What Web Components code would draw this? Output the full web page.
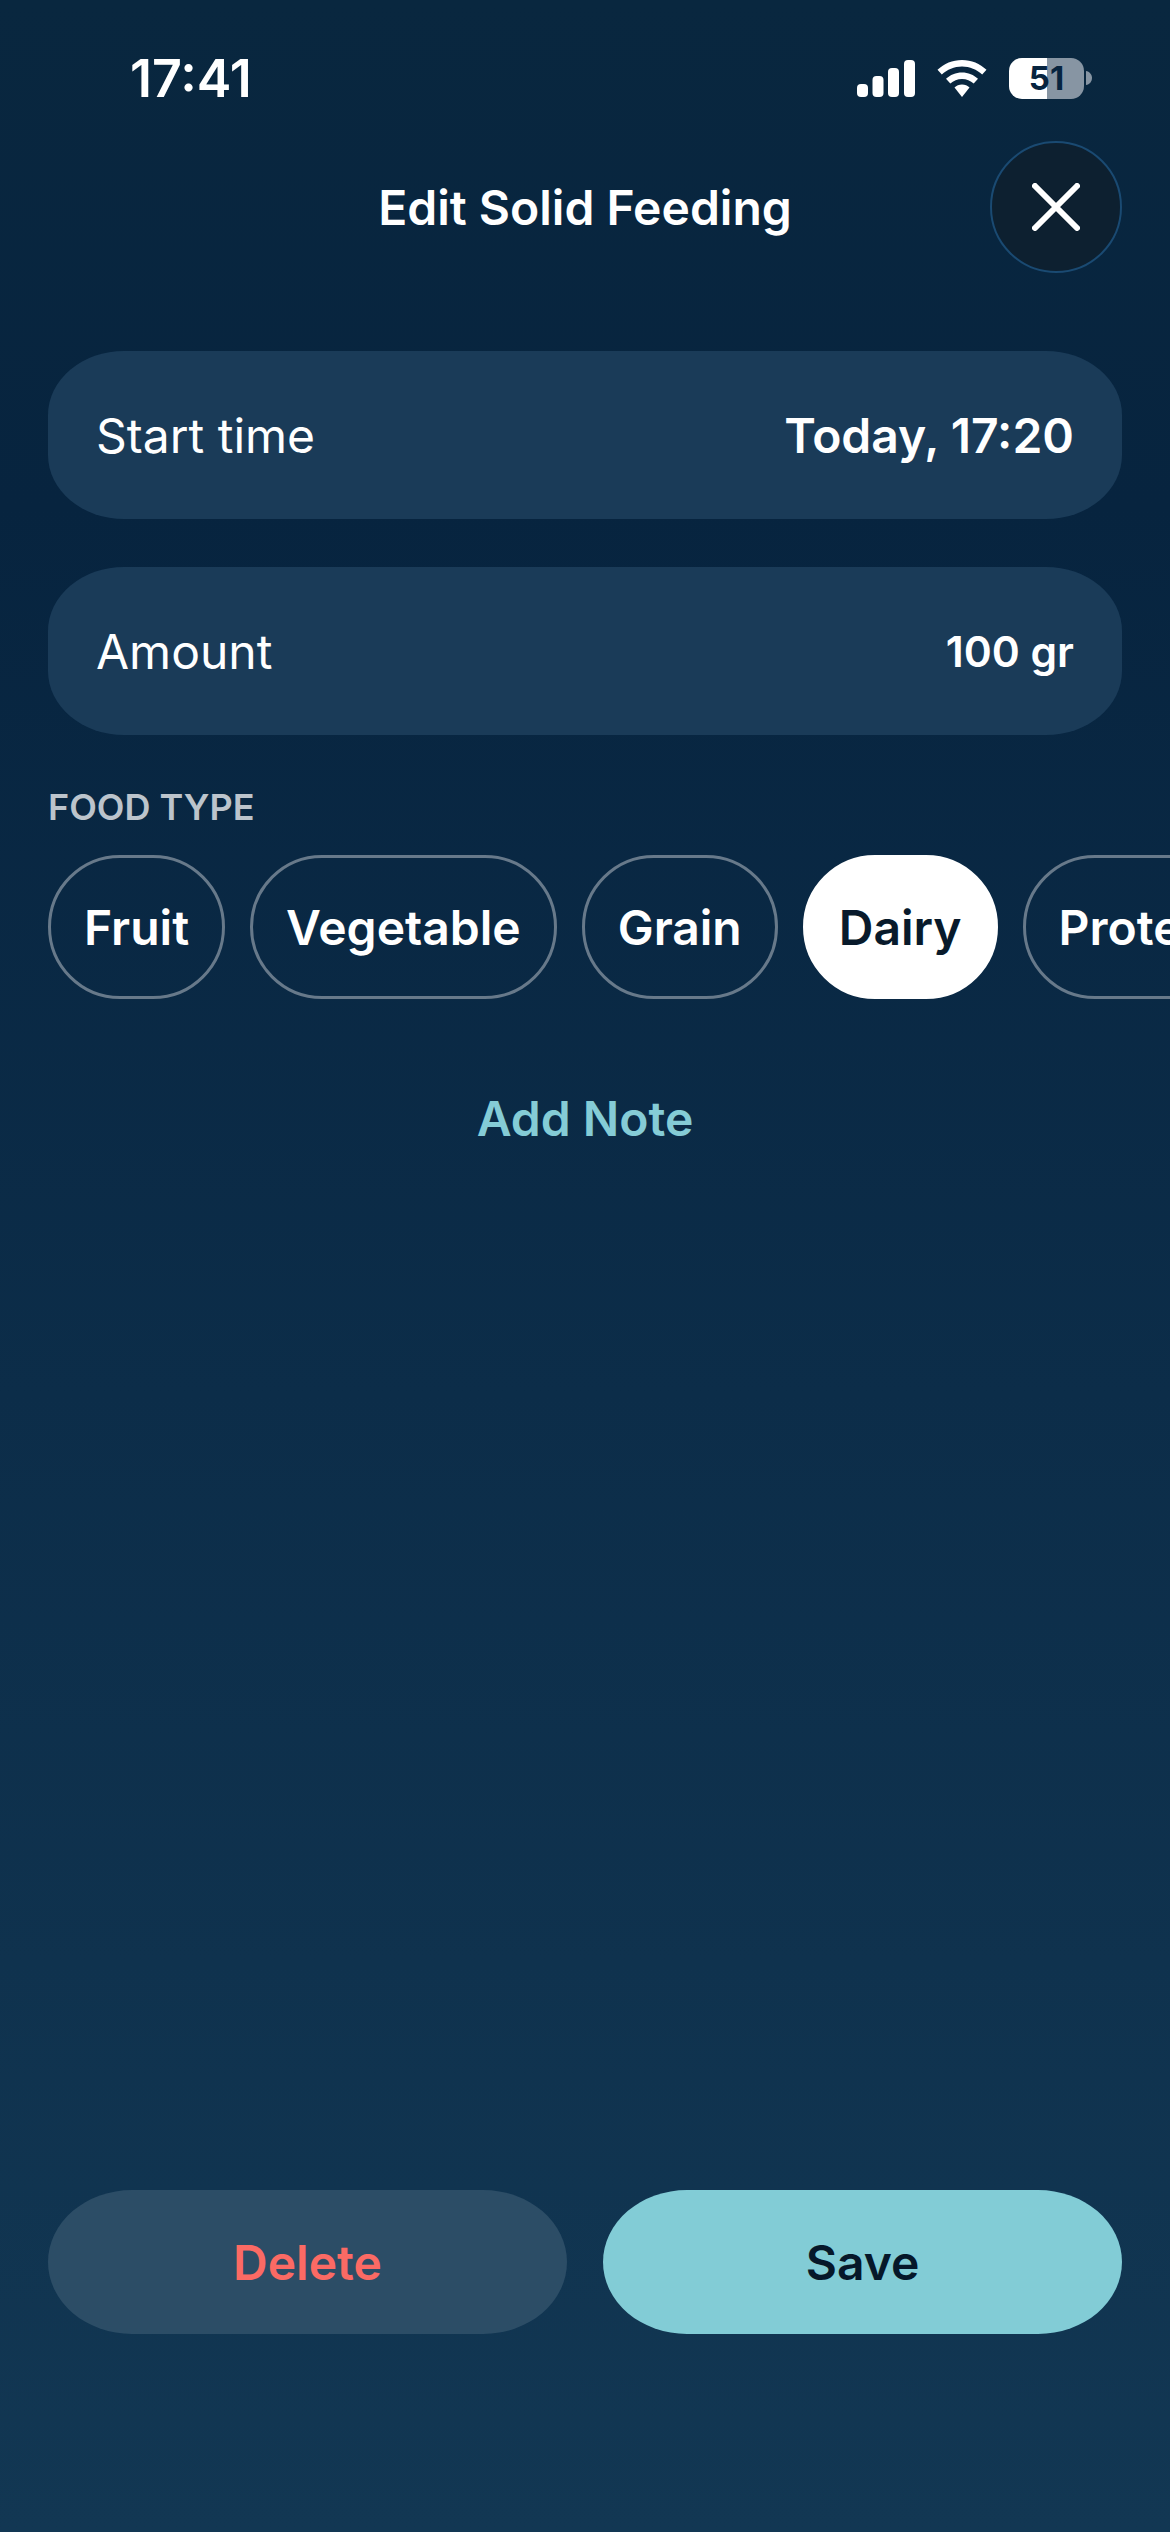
<!DOCTYPE html>
<html>
<head>
<meta charset="utf-8">
<title>Edit Solid Feeding</title>
<style>
    html, body { margin: 0; padding: 0; }
    body {
        width: 1170px;
        height: 2532px;
        overflow: hidden;
        background: linear-gradient(180deg, #09273f 0%, #07243f 20%, #0c2d49 55%, #123753 100%);
        font-family: Inter, "Liberation Sans", sans-serif;
        color: #fff;
    }
</style>
</head>
<body>
<feeding-screen>
    <status-bar slot="status" time="17:41" level="51"></status-bar>
    <sheet-header slot="header">Edit Solid Feeding</sheet-header>
    <field-row slot="fields" label="Start time" value="Today, 17:20"></field-row>
    <field-row slot="fields" label="Amount" value="100 gr" small></field-row>
    <chip-group slot="food" title="FOOD TYPE">
        <food-chip>Fruit</food-chip>
        <food-chip>Vegetable</food-chip>
        <food-chip>Grain</food-chip>
        <food-chip selected>Dairy</food-chip>
        <food-chip>Protein</food-chip>
    </chip-group>
    <span slot="note">Add Note</span>
    <action-button slot="actions" kind="delete">Delete</action-button>
    <action-button slot="actions" kind="save">Save</action-button>
</feeding-screen>

<script>
class FeedingScreen extends HTMLElement {
    constructor() {
        super();
        this.attachShadow({ mode: 'open' });
        this.shadowRoot.innerHTML = `
            <style>
                :host {
                    display: flex;
                    flex-direction: column;
                    height: 2532px;
                    box-sizing: border-box;
                    padding-bottom: 198px;
                }
                .fields {
                    display: flex;
                    flex-direction: column;
                    gap: 48px;
                    padding: 78px 48px 0;
                }
                .note {
                    display: block;
                    margin-top: 93px;
                    text-align: center;
                    font-size: 48px;
                    line-height: 54px;
                    font-weight: 600;
                    color: #85ccd6;
                }
                .actions {
                    display: grid;
                    grid-template-columns: 1fr 1fr;
                    gap: 36px;
                    margin-top: auto;
                    padding: 0 48px;
                }
            </style>
            <slot name="status"></slot>
            <slot name="header"></slot>
            <div class="fields"><slot name="fields"></slot></div>
            <slot name="food"></slot>
            <div class="note"><slot name="note"></slot></div>
            <div class="actions"><slot name="actions"></slot></div>
        `;
    }
}

class StatusBar extends HTMLElement {
    constructor() {
        super();
        this.attachShadow({ mode: 'open' });
    }

    connectedCallback() {
        this.shadowRoot.innerHTML = `
            <style>
                :host {
                    display: flex;
                    align-items: center;
                    justify-content: space-between;
                    height: 78px;
                    padding: 39px 78px 0 130px;
                    box-sizing: content-box;
                    width: 962px;
                }
                .time {
                    font-size: 52px;
                    font-weight: 600;
                    letter-spacing: 0;
                }
                .icons {
                    display: flex;
                    align-items: center;
                }
                svg { display: block; }
                .wifi { margin-left: 22px; }
                .battery {
                    margin-left: 22px;
                    width: 75px;
                    height: 41px;
                    border-radius: 13px;
                    background: linear-gradient(90deg, #fff 0 38px, #8795a3 38px);
                    color: #07243f;
                    font-size: 33px;
                    font-weight: 700;
                    line-height: 41px;
                    text-align: center;
                }
                .tip { margin-left: 2px; }
            </style>
            <div class="time">${this.getAttribute('time')}</div>
            <div class="icons">
                <svg width="58" height="37" viewBox="0 0 58 37" fill="#fff">
                    <rect x="0" y="24" width="11" height="13" rx="4"/>
                    <rect x="15.5" y="16" width="11" height="21" rx="4"/>
                    <rect x="31" y="8" width="11" height="29" rx="4"/>
                    <rect x="47" y="0" width="11" height="37" rx="4"/>
                </svg>
                <svg class="wifi" width="50" height="37" viewBox="0 0 50 37" fill="#fff">
                    <path d="M25 0C15.500 0 7 3.700 0.500 9.800L4.800 14.500C10.200 9.500 17.200 6.500 25 6.500S39.800 9.500 45.200 14.500L49.500 9.800C43 3.700 34.500 0 25 0Z"/>
                    <path d="M25 12.500C18.800 12.500 13.200 14.900 9 18.800L13.300 23.500C16.400 20.600 20.500 18.900 25 18.900S33.600 20.600 36.700 23.500L41 18.800C36.800 14.900 31.200 12.500 25 12.500Z"/>
                    <path d="M25 24.500C22 24.500 19.500 25.500 17.500 27.400L25 37L32.500 27.400C30.500 25.500 28 24.500 25 24.500Z"/>
                </svg>
                <div class="battery">${this.getAttribute('level')}</div>
                <svg class="tip" width="6" height="14" viewBox="0 0 6 14" fill="#8795a3">
                    <path d="M0 0C3.500 0.500 6 3.500 6 7S3.500 13.500 0 14Z"/>
                </svg>
            </div>
        `;
    }
}

class SheetHeader extends HTMLElement {
    constructor() {
        super();
        this.attachShadow({ mode: 'open' });
        this.shadowRoot.innerHTML = `
            <style>
                :host {
                    display: grid;
                    grid-template-columns: 132px 1fr 132px;
                    align-items: center;
                    height: 132px;
                    margin-top: 24px;
                    padding: 0 48px;
                }
                .title {
                    grid-column: 2;
                    text-align: center;
                    font-size: 48px;
                    font-weight: 600;
                }
                .close {
                    grid-column: 3;
                    display: flex;
                    align-items: center;
                    justify-content: center;
                    width: 132px;
                    height: 132px;
                    box-sizing: border-box;
                    border-radius: 50%;
                    background: #0d2030;
                    border: 2.500px solid #1a4a72;
                }
            </style>
            <div class="title"><slot></slot></div>
            <div class="close">
                <svg width="48" height="48" viewBox="0 0 48 48" fill="none" stroke="#fff" stroke-width="6" stroke-linecap="round">
                    <path d="M3 3L45 45M45 3L3 45"/>
                </svg>
            </div>
        `;
    }
}

class FieldRow extends HTMLElement {
    constructor() {
        super();
        this.attachShadow({ mode: 'open' });
    }

    connectedCallback() {
        const size = this.hasAttribute('small') ? 42.5 : 48;
        this.shadowRoot.innerHTML = `
            <style>
                :host {
                    display: flex;
                    align-items: center;
                    justify-content: space-between;
                    height: 168px;
                    box-sizing: border-box;
                    padding: 0 48px;
                    border-radius: 76px / 64px;
                    background: #1a3b58;
                }
                .label { font-size: 48px; font-weight: 400; }
                .value { font-size: ${size}px; font-weight: 600; }
            </style>
            <div class="label">${this.getAttribute('label')}</div>
            <div class="value">${this.getAttribute('value')}</div>
        `;
    }
}

class ChipGroup extends HTMLElement {
    constructor() {
        super();
        this.attachShadow({ mode: 'open' });
    }

    connectedCallback() {
        this.shadowRoot.innerHTML = `
            <style>
                :host { display: block; margin-top: 50px; }
                .title {
                    padding-left: 48px;
                    font-size: 36px;
                    line-height: 44px;
                    font-weight: 600;
                    color: #bcc4cc;
                }
                .row {
                    display: flex;
                    gap: 25px;
                    margin-top: 26px;
                    padding-left: 48px;
                    overflow: hidden;
                }
            </style>
            <div class="title">${this.getAttribute('title')}</div>
            <div class="row"><slot></slot></div>
        `;
    }
}

class FoodChip extends HTMLElement {
    constructor() {
        super();
        this.attachShadow({ mode: 'open' });
        this.shadowRoot.innerHTML = `
            <style>
                :host {
                    display: flex;
                    flex: none;
                    align-items: center;
                    height: 144px;
                    box-sizing: border-box;
                    padding: 0 33px;
                    border-radius: 72px;
                    border: 3px solid #67798a;
                    font-size: 48px;
                    font-weight: 600;
                    color: #fff;
                }
                :host([selected]) {
                    background: #fff;
                    border-color: #fff;
                    color: #081a2b;
                }
            </style>
            <slot></slot>
        `;
    }
}

class ActionButton extends HTMLElement {
    constructor() {
        super();
        this.attachShadow({ mode: 'open' });
        this.shadowRoot.innerHTML = `
            <style>
                :host {
                    display: flex;
                    align-items: center;
                    justify-content: center;
                    height: 144px;
                    border-radius: 84px / 72px;
                    font-size: 48px;
                    font-weight: 600;
                }
                :host([kind="delete"]) { background: #2c4d66; color: #fb6a64; }
                :host([kind="save"]) { background: #82ccd6; color: #06182a; }
            </style>
            <slot></slot>
        `;
    }
}

customElements.define('feeding-screen', FeedingScreen);
customElements.define('status-bar', StatusBar);
customElements.define('sheet-header', SheetHeader);
customElements.define('field-row', FieldRow);
customElements.define('chip-group', ChipGroup);
customElements.define('food-chip', FoodChip);
customElements.define('action-button', ActionButton);
</script>
</body>
</html>
